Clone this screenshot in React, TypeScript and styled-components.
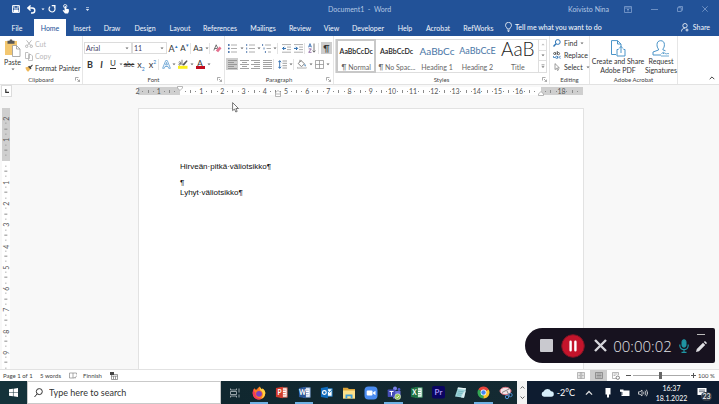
import React from 'react';
import styled, { createGlobalStyle, css } from 'styled-components';

const ui = 'Lato, "Open Sans", sans-serif';

const GlobalStyle = createGlobalStyle`
  * { box-sizing: border-box; }
  body { margin: 0; font-family: ${ui}; font-size: 7px; color: #333; }
  button, input, select { font: inherit; color: inherit; margin: 0; padding: 0; border: 0; background: none; border-radius: 0; outline: 0; }
  h1, h2, p { margin: 0; font: inherit; }
  svg { display: block; flex: none; }
`;

const Window = styled.div`
  display: flex;
  flex-direction: column;
  height: 100vh;
  overflow: hidden;
  background: #f8f8f8;
`;

/* ---------- title bar and tabs ---------- */
const TitleBar = styled.header`
  display: grid;
  grid-template-columns: 1fr auto 1fr;
  align-items: center;
  height: 18px;
  flex: none;
  background: #225298;
  color: #b4c8e4;
`;
const QuickAccess = styled.div`
  display: flex;
  align-items: center;
  padding-left: 10px;
`;
const WindowControls = styled.div`
  display: flex;
  align-items: center;
  justify-content: flex-end;
  padding-right: 2px;
`;
const UserName = styled.span`margin-right: 6px;`;
const DocTitle = styled.h1`white-space: pre;`;

const IconButton = styled.button<{ $w?: number; $h?: number; $on?: boolean }>`
  display: flex;
  align-items: center;
  justify-content: center;
  flex: none;
  width: ${p => p.$w ?? 12}px;
  height: ${p => p.$h ?? 12}px;
  background: ${p => (p.$on ? '#cdcdcd' : 'transparent')};
`;

const TabBar = styled.nav`
  display: flex;
  align-items: stretch;
  height: 18px;
  flex: none;
  background: #225298;
  color: #f4f7fc;
`;
const Tab = styled.button<{ $w: number; $active?: boolean }>`
  width: ${p => p.$w}px;
  flex: none;
  margin-top: 1px;
  white-space: nowrap;
  ${p => p.$active && css`background: #fff; color: #225298;`}
`;
const TellMe = styled.button`
  display: flex;
  align-items: center;
  gap: 3px;
  margin-left: 5px;
  font-weight: 500;
  white-space: nowrap;
`;
const Share = styled.button`
  display: flex;
  align-items: center;
  gap: 4px;
  margin-left: auto;
  padding-right: 9px;
`;

/* ---------- ribbon ---------- */
const Ribbon = styled.div`
  display: flex;
  height: 49px;
  flex: none;
  background: #fff;
  border-bottom: 1px solid #e2e2e2;
`;
const GroupBox = styled.section<{ $w: number }>`
  display: flex;
  flex-direction: column;
  width: ${p => p.$w}px;
  flex: none;
  border-right: 1px solid #e6e6e6;
`;
const GroupBody = styled.div`
  display: flex;
  flex: 1;
  min-height: 0;
`;
const GroupFooter = styled.div`
  display: grid;
  grid-template-columns: 8px 1fr 8px;
  align-items: center;
  height: 9px;
  font-size: 6px;
  text-align: center;
  color: #444;
`;
const Rows = styled.div`
  display: flex;
  flex-direction: column;
  gap: 4px;
  padding: 6px 0 0 1px;
`;
const Row = styled.div`
  display: flex;
  align-items: center;
  height: 12px;
`;
const Sep = styled.i<{ $w?: number }>`
  width: 1px;
  height: 11px;
  margin: 0 ${p => p.$w ?? 1}px 0 0;
  background: #e4e4e4;
`;
const Combo = styled.label<{ $w: number }>`
  display: flex;
  align-items: center;
  width: ${p => p.$w}px;
  height: 12px;
  border: 1px solid #dcdcdc;
  padding: 0 2px 0 1px;
  flex: none;
  select { appearance: none; flex: 1; min-width: 0; line-height: 10px; color: #446; }
`;
const Paste = styled.button`
  display: flex;
  flex-direction: column;
  align-items: center;
  width: 25px;
  padding-top: 3px;
  gap: 1px;
  line-height: 9px;
`;
const ClipList = styled.div`
  display: flex;
  flex-direction: column;
  padding-top: 2px;
`;
const TextButton = styled.button<{ $off?: boolean }>`
  display: flex;
  align-items: center;
  gap: 2px;
  height: 12px;
  line-height: 12px;
  white-space: nowrap;
  color: ${p => (p.$off ? '#b8b8b8' : '#333')};
`;
const Glyph = styled.span<{ $size?: number; $bold?: boolean; $italic?: boolean; $under?: string; $strike?: boolean }>`
  font-size: ${p => p.$size ?? 9}px;
  line-height: 9px;
  font-weight: ${p => (p.$bold ? 700 : 400)};
  font-style: ${p => (p.$italic ? 'italic' : 'normal')};
  text-decoration: ${p => (p.$strike ? 'line-through' : 'none')};
  border-bottom: ${p => (p.$under ? `1px solid ${p.$under}` : '0')};
  white-space: nowrap;
  sub, sup { font-size: 5px; line-height: 0; color: #2f78c0; }
`;
const Swatch = styled.span<{ $color: string }>`
  display: flex;
  justify-content: center;
  width: 9px;
  height: 10px;
  font-size: 8px;
  line-height: 8px;
  border-bottom: 3px solid ${p => p.$color};
`;

const Gallery = styled.div`
  display: flex;
  flex: 1;
  height: 34px;
  margin: 3px 2px 0 1px;
  border: 1px solid #dedede;
`;
const StyleCell = styled.button<{ $active?: boolean }>`
  display: grid;
  grid-template-rows: 21px 9px;
  grid-template-columns: minmax(0, 1fr);
  flex: 1 1 0;
  min-width: 0;
  margin: -1px 0;
  align-items: center;
  white-space: nowrap;
  color: #666;
  border: 2px solid ${p => (p.$active ? '#c8c8c8' : 'transparent')};
`;
const Sample = styled.span<{ $size: number; $color: string }>`
  align-self: start;
  font-size: ${p => p.$size}px;
  line-height: ${p => (p.$size > 12 ? 15 : 20)}px;
  color: ${p => p.$color};
  font-weight: ${p => (p.$size < 8 ? 600 : p.$size < 12 ? 400 : 300)};
`;
const GalleryNav = styled.div`
  display: grid;
  grid-template-rows: repeat(3, 1fr);
  width: 8px;
  border-left: 1px solid #dedede;
  button { display: flex; align-items: center; justify-content: center; border-bottom: 1px solid #dedede; }
  button:last-child { border-bottom: 0; }
`;
const EditList = styled.div`
  display: flex;
  flex-direction: column;
  padding: 1px 0 0 3px;
`;
const EditButton = styled(TextButton)`gap: 3px;`;
const AcrobatButtons = styled.div`
  display: flex;
  padding-left: 1px;
`;
const BigButton = styled.button<{ $w: number }>`
  display: flex;
  flex-direction: column;
  align-items: center;
  width: ${p => p.$w}px;
  padding-top: 4px;
  line-height: 9px;
  white-space: nowrap;
`;
const Collapse = styled.button`
  margin: auto 4px 3px auto;
`;

/* ---------- workspace ---------- */
const RulerRow = styled.div`
  display: flex;
  flex: none;
  height: 12px;
`;
const TabPicker = styled.button`
  display: flex;
  align-items: center;
  justify-content: center;
  width: 11px;
  height: 12px;
  margin-left: 1px;
  background: #fff;
  border: 1px solid #dcdcdc;
`;
const HRuler = styled.div`
  position: relative;
  width: 445px;
  height: 8px;
  margin: 2px 0 0 126px;
  background: linear-gradient(90deg, #cfcfcf 0 42px, #fff 42px 403px, #cfcfcf 403px);
`;
const HScale = styled.div`
  display: grid;
  grid-template-columns: repeat(84, minmax(0, 1fr));
  width: 445px;
  height: 8px;
  margin-left: -3px;
`;
const VRuler = styled.div`
  width: 8px;
  flex: none;
  margin: 11px 0 0 2px;
  padding-top: 8px;
  overflow: hidden;
  background: linear-gradient(#cfcfcf 0 53px, #fff 53px);
`;
const VScale = styled.div`
  display: grid;
  grid-template-rows: repeat(48, minmax(0, 1fr));
  height: 255px;
`;
const Tick = styled.span<{ $v?: boolean }>`
  display: flex;
  align-items: center;
  justify-content: center;
  min-height: 0;
  font-size: 7px;
  line-height: 6px;
  color: #555;
  ${p => p.$v && css`transform: rotate(-90deg);`}
`;
const Mark = styled.i<{ $tall?: boolean }>`
  width: 1px;
  height: ${p => (p.$tall ? 3 : 1)}px;
  background: #8c8c8c;
`;
const Marker = styled.svg<{ $x: number; $y: number }>`
  position: absolute;
  left: ${p => p.$x}px;
  top: ${p => p.$y}px;
`;
const Workspace = styled.main`
  position: relative;
  display: flex;
  flex: 1;
  min-height: 0;
`;
const Page = styled.article`
  width: 446px;
  margin: 11px 0 0 128px;
  padding: 53px 41px 0;
  background: #fff;
  border: 1px solid #e2e2e2;
  border-bottom: 0;
  font-family: "Liberation Sans", Arial, sans-serif;
  font-size: 8px;
  line-height: 10px;
  color: #111;
`;
const Heading = styled.h2`margin-bottom: 6px;`;
const Pointer = styled.svg`
  position: absolute;
  left: 232px;
  top: 5px;
`;

/* ---------- status bar ---------- */
const StatusBar = styled.footer`
  display: flex;
  align-items: center;
  height: 12px;
  flex: none;
  padding: 0 1px 0 3px;
  background: #fff;
  border-top: 1px solid #e2e2e2;
  font-size: 6px;
  color: #444;
`;
const StatusText = styled.span<{ $w: number }>`width: ${p => p.$w}px; white-space: nowrap;`;
const Language = styled(StatusText)`margin-left: 6px;`;
const StatusRight = styled.div`
  display: flex;
  align-items: center;
  margin-left: auto;
`;
const Zoom = styled.input`
  appearance: none;
  width: 57px;
  height: 9px;
  margin: 0 1px;
  background: linear-gradient(#aaa, #aaa) center / 100% 1px no-repeat;
  &::-webkit-slider-thumb { appearance: none; width: 3px; height: 7px; background: #666; }
`;

/* ---------- taskbar ---------- */
const Taskbar = styled.footer`
  display: flex;
  height: 23px;
  flex: none;
  background: #0e1c30;
  color: #fff;
`;
const Start = styled.button`
  display: flex;
  align-items: center;
  justify-content: center;
  width: 27px;
  background: #14323a;
`;
const SearchBox = styled.label`
  display: flex;
  align-items: center;
  gap: 6px;
  width: 194px;
  padding-left: 6px;
  background: #fff;
  border: 1px solid #c9c9c9;
  color: #333;
  font-size: 9px;
  input { width: 130px; line-height: 14px; }
  input::placeholder { color: #333; opacity: 1; }
`;
const Apps = styled.div`
  display: grid;
  grid-template-columns: 27px repeat(12, 1fr);
  flex: 0 0 296px;
  background: linear-gradient(90deg, #10272f, #142a32);
`;
const AppButton = styled.button<{ $open?: boolean }>`
  display: flex;
  align-items: center;
  justify-content: center;
  margin: 0 2px;
  border-top: 2px solid transparent;
  border-bottom: 2px solid ${p => (p.$open ? '#6fb2e4' : 'transparent')};
`;
const Pager = styled.div`
  display: flex;
  flex-direction: column;
  justify-content: space-between;
  align-items: center;
  width: 10px;
  padding: 4px 0;
  background: #f4f4f4;
`;
const Tray = styled.div`
  display: flex;
  align-items: center;
  flex: 1;
  justify-content: flex-end;
  font-size: 9px;
`;
const Clock = styled.div`
  width: 35px;
  margin-left: 5px;
  font-size: 7px;
  line-height: 10px;
  text-align: center;
`;
const Notice = styled.button`
  position: relative;
  width: 16px;
  height: 16px;
  margin: 0 7px 0 7px;
`;
const Badge = styled.span`
  position: absolute;
  right: 0;
  bottom: 0;
  width: 11px;
  height: 9px;
  border-radius: 5px;
  background: #333c48;
  font-size: 7px;
  line-height: 9px;
`;

/* ---------- floating screen recorder ---------- */
const Recorder = styled.aside`
  position: fixed;
  right: 4px;
  bottom: 41px;
  display: flex;
  align-items: center;
  width: 190px;
  height: 35px;
  padding-left: 15px;
  border-radius: 18px 2px 2px 18px;
  background: #17121f;
  color: #e4e4e8;
`;
const Timer = styled.time`
  width: 71px;
  font-family: "Open Sans", sans-serif;
  font-weight: 300;
  font-size: 15px;
  text-align: center;
`;
const PenColumn = styled.div`
  display: flex;
  flex-direction: column;
  align-items: center;
  justify-content: space-between;
  height: 35px;
  padding: 5px 0 11px 2px;
`;

const Caret = ({ c = '#666' }: { c?: string }) => (
  <svg width="4" height="3" viewBox="0 0 4 3"><path d="M.5.6h3L2 2.3z" fill={c} /></svg>
);
const Drop = ({ w = 5, label }: { w?: number; label: string }) => (
  <IconButton $w={w} aria-label={label}><Caret /></IconButton>
);
const Chevron = ({ up, c = '#444', s = 6 }: { up?: boolean; c?: string; s?: number }) => (
  <svg width={s} height={s} viewBox="0 0 6 6" fill="none" stroke={c}><path d={up ? 'M.7 4.2 3 1.9l2.3 2.3' : 'M.7 1.9 3 4.2l2.3-2.3'} /></svg>
);

const Group = ({ name, w, launcher, children }: { name: string; w: number; launcher?: boolean; children: React.ReactNode }) => (
  <GroupBox $w={w} aria-label={name}>
    <GroupBody>{children}</GroupBody>
    <GroupFooter>
      <span />
      <span>{name}</span>
      {launcher && (
        <IconButton $w={6} $h={6} aria-label={`${name} settings`}>
          <svg width="5" height="5" viewBox="0 0 5 5" fill="none" stroke="#888" strokeWidth=".7"><path d="M.5 3.5v-3h3M2 2l2.4 2.4M4.5 2.6v2h-2" /></svg>
        </IconButton>
      )}
    </GroupFooter>
  </GroupBox>
);

const Lines = ({ widths, align = 'left' }: { widths: number[]; align?: string }) => (
  <svg width="9" height="9" viewBox="0 0 9 9" stroke="#8a8a8a" strokeWidth=".8">
    {widths.map((w, i) => {
      const x = align === 'left' ? 0 : align === 'right' ? 9 - w : (9 - w) / 2;
      return <path key={i} d={`M${x} ${0.5 + i * 2}h${w}`} />;
    })}
  </svg>
);

const ListIcon = ({ kind }: { kind: 'dot' | 'num' | 'multi' }) => (
  <svg width="9" height="9" viewBox="0 0 9 9" fill="none">
    {[1, 4.5, 8].map((y, i) => (
      <g key={y}>
        <path d={`M${kind === 'multi' ? 3 + i * 1.5 : 3} ${y}H9`} stroke="#999" strokeWidth=".8" />
        {kind === 'dot' && <rect x="0" y={y - 0.8} width="1.6" height="1.6" fill="#2e5f9f" />}
        {kind === 'num' && <path d={`M.7 ${y - 1}v2`} stroke="#2e5f9f" strokeWidth=".8" />}
        {kind === 'multi' && <path d={`M${0.6 + i * 1.4} ${y - 1}v2`} stroke="#2e5f9f" strokeWidth=".8" />}
      </g>
    ))}
  </svg>
);

const IndentIcon = ({ flip }: { flip?: boolean }) => (
  <svg width="9" height="9" viewBox="0 0 9 9" fill="none">
    <path d="M0 .6h9M5 3.1h4M5 5.6h4M0 8.2h9" stroke="#999" strokeWidth=".8" />
    <path d={flip ? 'M0 4.4h3.4M2 2.8l1.6 1.6L2 6' : 'M4 4.4H.6M2.2 2.8.6 4.4 2.2 6'} stroke="#2467ad" strokeWidth="1" />
  </svg>
);

const tabs: [string, number][] = [
  ['File', 34], ['Home', 32], ['Insert', 32], ['Draw', 28], ['Design', 38], ['Layout', 32], ['References', 48],
  ['Mailings', 38], ['Review', 36], ['View', 27], ['Developer', 46], ['Help', 28], ['Acrobat', 38], ['RefWorks', 43],
];

const styleCells = [
  { name: '¶ Normal', sample: 'AaBbCcDc', size: 7, color: '#222' },
  { name: '¶ No Spac...', sample: 'AaBbCcDc', size: 7, color: '#222' },
  { name: 'Heading 1', sample: 'AaBbCc', size: 10, color: '#4a76a6' },
  { name: 'Heading 2', sample: 'AaBbCcE', size: 9, color: '#4a76a6' },
  { name: 'Title', sample: 'AaB', size: 19, color: '#222' },
];

const scale = (start: number, cells: number, hidden: number[], vertical?: boolean) =>
  Array.from({ length: cells * 4 }, (_, i) => {
    const n = Math.abs(start + i / 4);
    const part = i % 4;
    return (
      <Tick key={i} $v={vertical}>
        {part === 0 ? (hidden.includes(start + i / 4) ? '' : n) : <Mark $tall={part === 2} />}
      </Tick>
    );
  });

const OfficeIcon = ({ letter, color, light }: { letter: string; color: string; light: string }) => (
  <svg width="13" height="13" viewBox="0 0 14 14">
    <rect x="6" y="2" width="7" height="10" fill="#fff" stroke={light} />
    <path d="M8.5 4.5h3M8.5 7h3M8.5 9.5h3" stroke={light} strokeWidth=".9" />
    <path d="M1 2.2 8.5.8v12.4L1 11.8z" fill={color} />
    <text x="4.8" y="9.6" fontSize="7" fontWeight="700" textAnchor="middle" fill="#fff">{letter}</text>
  </svg>
);

export default function App() {
  return (
    <Window>
      <GlobalStyle />
      <TitleBar>
        <QuickAccess>
          <IconButton aria-label="Save">
            <svg width="8" height="8" viewBox="0 0 8 8" fill="none" stroke="#fff"><path d="M.6.6h6.8v6.8H.6z" /><path d="M2 .6v2.6h4V.6" strokeWidth=".8" /><path d="M2 7.2V5h4v2.2" fill="#fff" /></svg>
          </IconButton>
          <IconButton $w={19} aria-label="Undo">
            <svg width="9" height="9" viewBox="0 0 9 9" fill="none" stroke="#fff" strokeWidth="1.4"><path d="M3.6.6.9 3l2.7 2.4M1 3h4.3a2.5 2.5 0 0 1 0 5H4" /></svg>
          </IconButton>
          <Caret c="#fff" />
          <IconButton $w={14} aria-label="Redo">
            <svg width="8" height="8" viewBox="0 0 9 9" fill="none" stroke="#fff" strokeWidth="1.3"><path d="M2.4 1.8a3.4 3.4 0 1 0 4.4.1M4.2.7h3.6v3.4" /></svg>
          </IconButton>
          <IconButton $w={14} aria-label="Touch mode">
            <svg width="8" height="10" viewBox="0 0 8 10"><circle cx="3.2" cy="2.2" r="1.7" fill="none" stroke="#fff" strokeWidth=".8" /><path d="M2.6 2.2a.7.7 0 0 1 1.3 0v2.4l3 .7v2.1L6 9.6H3L.6 6.6l.9-.6 1.1.8z" fill="#fff" /></svg>
          </IconButton>
          <Caret c="#fff" />
          <IconButton $w={20} aria-label="Customize toolbar">
            <svg width="5" height="5" viewBox="0 0 5 5"><path d="M1 .6h3" stroke="#dce6f4" strokeWidth=".7" /><path d="M.8 2h3.4L2.5 4z" fill="#dce6f4" /></svg>
          </IconButton>
        </QuickAccess>
        <DocTitle>Document1  -  Word</DocTitle>
        <WindowControls>
          <UserName>Koivisto Nina</UserName>
          <IconButton $w={26} aria-label="Ribbon display options">
            <svg width="8" height="7" viewBox="0 0 8 7" fill="none" stroke="#7f9fce" strokeWidth=".8"><path d="M.5.5h7v6h-7zM.5 2h7M4 5.6V3M3 4l1-1 1 1" /></svg>
          </IconButton>
          <IconButton $w={26} aria-label="Minimize">
            <svg width="7" height="7" viewBox="0 0 7 7" stroke="#7f9fce" strokeWidth=".8"><path d="M0 3.5h7" /></svg>
          </IconButton>
          <IconButton $w={26} aria-label="Restore">
            <svg width="6" height="6" viewBox="0 0 6 6" fill="none" stroke="#7f9fce" strokeWidth=".8"><path d="M.5 1.7h3.8v3.8H.5zM1.7 1.5V.5h3.8v3.8H4.5" /></svg>
          </IconButton>
          <IconButton $w={24} aria-label="Close">
            <svg width="6" height="6" viewBox="0 0 6 6" stroke="#7f9fce" strokeWidth=".8"><path d="m.3.3 5.4 5.4M5.7.3.3 5.7" /></svg>
          </IconButton>
        </WindowControls>
      </TitleBar>

      <TabBar>
        {tabs.map(([name, w]) => <Tab key={name} $w={w} $active={name === 'Home'}>{name}</Tab>)}
        <TellMe>
          <svg width="7" height="10" viewBox="0 0 7 10" fill="none" stroke="#fff" strokeWidth=".8"><path d="M2.3 7C2.3 5.6.5 5 .5 3.3a3 3 0 0 1 6 0C6.5 5 4.7 5.6 4.7 7zM2.4 8.3h2.2M2.8 9.5h1.4" /></svg>
          Tell me what you want to do
        </TellMe>
        <Share>
          <svg width="8" height="9" viewBox="0 0 8 9" fill="none" stroke="#fff" strokeWidth=".8"><circle cx="4" cy="2.7" r="2.2" /><path d="M.5 8.5c0-2 1.4-3.4 3.5-3.4M4.5 7h3M6 5.5v3" /></svg>
          Share
        </Share>
      </TabBar>

      <Ribbon>
        <Group name="Clipboard" w={83} launcher>
          <Paste>
            <svg width="17" height="18" viewBox="0 0 17 18">
              <rect x="1" y="2" width="12" height="14" fill="#f3c770" />
              <path d="M3.500 1.800h2a1.500 1.500 0 0 1 3 0h2v3h-7z" fill="#555" />
              <path d="M8.500 6.500h4l3.500 3.500v7.500H8.500z" fill="#fff" stroke="#999" strokeWidth=".8" /><path d="M12.500 6.500V10H16" fill="none" stroke="#999" strokeWidth=".8" />
            </svg>
            Paste
            <Caret />
          </Paste>
          <ClipList>
            <TextButton $off>
              <svg width="8" height="8" viewBox="0 0 8 8" fill="none" stroke="#a8a8a8" strokeWidth=".8"><path d="m1.500.3 4 5M6.500.3l-4 5" /><circle cx="1.700" cy="6.300" r="1.200" /><circle cx="6.300" cy="6.300" r="1.200" /></svg>
              Cut
            </TextButton>
            <TextButton $off>
              <svg width="8" height="9" viewBox="0 0 8 9" fill="#fff" stroke="#b0b0b0" strokeWidth=".8"><path d="M.5.5H3L4.500 2v4.500h-4zM3.500 2.500H6L7.500 4v4.500h-4z" /></svg>
              Copy
            </TextButton>
            <TextButton>
              <svg width="8" height="8" viewBox="0 0 8 8"><path d="m.4 3.500 3.200-1L5.600 5l-2.400 2.700C2 7.400.8 5.500.4 3.500z" fill="#efb95a" /><path d="m3 2.700 1.200-1 .9.800L7.200.6l.6.800-1.900 2 .6 1-1.100.8z" fill="#444" /></svg>
              Format Painter
            </TextButton>
          </ClipList>
        </Group>

        <Group name="Font" w={142} launcher>
          <Rows>
            <Row>
              <Combo $w={48}><select aria-label="Font"><option>Arial</option></select><Caret /></Combo>
              <Combo $w={35}><select aria-label="Font size"><option>11</option></select><Caret /></Combo>
              <IconButton aria-label="Grow font"><Glyph>A<sup>▴</sup></Glyph></IconButton>
              <IconButton $w={11} aria-label="Shrink font"><Glyph $size={8}>A<sup>▾</sup></Glyph></IconButton>
              <Sep />
              <IconButton $w={12} aria-label="Change case"><Glyph $size={8}>Aa</Glyph></IconButton>
              <Drop label="Case options" />
              <Sep />
              <IconButton $w={13} aria-label="Clear formatting">
                <svg width="9" height="9" viewBox="0 0 9 9"><path d="M.8 6.500 3.200.8l1.800 4M1.500 4.500h2.700" fill="none" stroke="#555" strokeWidth=".8" /><path d="m6.600 2.500 1.900 1.700-3.400 4-2.300-1.600z" fill="#e4708e" /></svg>
              </IconButton>
            </Row>
            <Row>
              <IconButton aria-label="Bold"><Glyph $bold>B</Glyph></IconButton>
              <IconButton $w={11} aria-label="Italic"><Glyph $italic $bold>I</Glyph></IconButton>
              <IconButton aria-label="Underline"><Glyph $size={8} $under="#333">U</Glyph></IconButton>
              <Drop label="Underline options" w={4} />
              <IconButton aria-label="Strikethrough"><Glyph $size={7} $strike>abc</Glyph></IconButton>
              <IconButton aria-label="Subscript"><Glyph>x<sub>2</sub></Glyph></IconButton>
              <IconButton $w={11} aria-label="Superscript"><Glyph>x<sup>2</sup></Glyph></IconButton>
              <Sep $w={2} />
              <IconButton $w={10} aria-label="Text effects">
                <svg width="9" height="9" viewBox="0 0 9 9" fill="#fff" stroke="#5a9bd0" strokeWidth=".8"><path d="M.6 8.300 3.700.6h1.600l3.100 7.700H6.700L6 6.500H3l-.7 1.800zM3.600 5h1.800l-.9-2.500z" /></svg>
              </IconButton>
              <Drop label="Text effect options" w={6} />
              <IconButton aria-label="Highlight">
                <svg width="10" height="10" viewBox="0 0 10 10"><rect y="6.800" width="9.500" height="3" fill="#fbef1c" /><path d="m4 6 4.500-4.800L9.700 2 6 6.500z" fill="#555" /><path d="M.7 3.300C2.500 2 3 3.300 2.800 6M2.800 4.300c-2.400 0-2.500 2-.8 1.700M4 .8v4.700" fill="none" stroke="#444" strokeWidth=".7" /></svg>
              </IconButton>
              <Drop label="Highlight options" />
              <IconButton aria-label="Font color"><Swatch $color="#c00d1e">A</Swatch></IconButton>
              <Drop label="Font color options" />
            </Row>
          </Rows>
        </Group>

        <Group name="Paragraph" w={109} launcher>
          <Rows>
            <Row>
              <IconButton $w={13} aria-label="Bullets"><ListIcon kind="dot" /></IconButton><Drop label="Bullet options" />
              <IconButton aria-label="Numbering"><ListIcon kind="num" /></IconButton><Drop label="Numbering options" />
              <IconButton $w={11} aria-label="Multilevel list"><ListIcon kind="multi" /></IconButton><Drop label="Multilevel options" />
              <Sep $w={2} />
              <IconButton aria-label="Decrease indent"><IndentIcon /></IconButton>
              <IconButton aria-label="Increase indent"><IndentIcon flip /></IconButton>
              <Sep />
              <IconButton aria-label="Sort">
                <svg width="8" height="10" viewBox="0 0 8 10" fill="none" strokeWidth=".8"><path d="M.5 4.300 2 .6l1.500 3.700M1 3.200h2" stroke="#2e66ad" /><path d="M.7 5.900h2.600L.7 9.300h2.800" stroke="#7b4b94" /><path d="M6 .5v8.600M4.600 7.600 6 9.200l1.400-1.600" stroke="#555" /></svg>
              </IconButton>
              <Sep $w={2} />
              <IconButton $w={11} $on aria-label="Show paragraph marks"><Glyph>¶</Glyph></IconButton>
            </Row>
            <Row>
              <IconButton $on aria-label="Align left"><Lines widths={[9, 6, 9, 6, 9]} /></IconButton>
              <IconButton aria-label="Center"><Lines widths={[9, 5, 9, 5, 9]} align="center" /></IconButton>
              <IconButton $w={11} aria-label="Align right"><Lines widths={[9, 6, 9, 6, 9]} align="right" /></IconButton>
              <IconButton $w={12} aria-label="Justify"><Lines widths={[9, 9, 9, 9, 9]} /></IconButton>
              <Sep $w={2} />
              <IconButton aria-label="Line spacing">
                <svg width="9" height="9" viewBox="0 0 9 9" fill="none"><path d="M1.700.7v7.600M.3 2.200 1.700.7l1.400 1.500M.3 6.800l1.400 1.500 1.400-1.500" stroke="#2467ad" strokeWidth=".9" /><path d="M4.500 1h4.500M4.500 3.300h4.500M4.500 5.700h4.500M4.500 8h4.500" stroke="#888" strokeWidth=".8" /></svg>
              </IconButton>
              <Drop label="Line spacing options" />
              <Sep $w={2} />
              <IconButton aria-label="Shading">
                <svg width="10" height="10" viewBox="0 0 10 10"><path d="m4 1.500 3.500 3.300-3 2.800-3.300-3zM3 3V.8" fill="none" stroke="#666" strokeWidth=".8" /><path d="M7.800 4.800c1 1.200 1.300 2.500.4 2.700-.9-.2-.8-1.500-.4-2.700z" fill="#2e75b6" /><rect x=".4" y="8.200" width="9" height="1.500" fill="#fff" stroke="#aaa" strokeWidth=".5" /></svg>
              </IconButton>
              <Drop label="Shading options" />
              <IconButton aria-label="Borders">
                <svg width="9" height="9" viewBox="0 0 9 9" fill="none" stroke="#888" strokeWidth=".7"><path d="M.5.5h8v8h-8zM.5 4.500h8M4.500.5v8" /></svg>
              </IconButton>
              <Drop label="Border options" />
            </Row>
          </Rows>
        </Group>

        <Group name="Styles" w={216} launcher>
          <Gallery>
            {styleCells.map((s, i) => (
              <StyleCell key={s.name} $active={i === 0}>
                <Sample $size={s.size} $color={s.color}>{s.sample}</Sample>
                <span>{s.name}</span>
              </StyleCell>
            ))}
            <GalleryNav>
              <button aria-label="Previous styles"><svg width="4" height="3" viewBox="0 0 4 3"><path d="M.5 2.300h3L2 .6z" fill="#bbb" /></svg></button>
              <button aria-label="Next styles"><Caret /></button>
              <button aria-label="More styles"><svg width="4" height="5" viewBox="0 0 4 5"><path d="M.5.8h3" stroke="#777" strokeWidth=".7" /><path d="M.5 2.200h3L2 4z" fill="#777" /></svg></button>
            </GalleryNav>
          </Gallery>
        </Group>

        <Group name="Editing" w={40}>
          <EditList>
            <EditButton>
              <svg width="8" height="8" viewBox="0 0 8 8" fill="none" stroke="#2e75b6"><circle cx="4.800" cy="3" r="2.400" /><path d="M3 4.800.5 7.400" strokeWidth="1.400" /></svg>
              Find <Caret />
            </EditButton>
            <EditButton>
              <svg width="8" height="8" viewBox="0 0 8 8" fill="none" strokeWidth=".8"><circle cx="1.600" cy="2.500" r="1" stroke="#444" /><path d="M2.700 1.300v2.400M4.300 0v3.700" stroke="#444" /><circle cx="5.500" cy="2.600" r="1.100" stroke="#444" /><circle cx="3.600" cy="6.300" r="1.100" stroke="#2e75b6" /><path d="M4.700 5v2.500M7.600 5.300c-1.800-.4-1.900 2.300 0 2M.5 5v1.500h1.500" stroke="#2e75b6" /></svg>
              Replace
            </EditButton>
            <EditButton>
              <svg width="8" height="8" viewBox="0 0 8 8" fill="#fff" stroke="#777" strokeWidth=".7"><path d="M2 .6v6l1.500-1.300 1 2.200 1-.5-1-2.100h1.900z" /></svg>
              Select <Caret />
            </EditButton>
          </EditList>
        </Group>

        <Group name="Adobe Acrobat" w={88}>
          <AcrobatButtons>
            <BigButton $w={54}>
              <svg width="16" height="17" viewBox="0 0 16 17" fill="none" stroke="#4a94c8"><path d="M6 14.500H1.500V.6h6L11 4v3M7.500.6V4H11" /><path d="M8.500 9.500H7v6.500h8V9.500h-1.500M11 13V6.500M9 8.500l2-2 2 2" /></svg>
              <span>Create and Share</span><span>Adobe PDF</span>
            </BigButton>
            <BigButton $w={32}>
              <svg width="18" height="17" viewBox="0 0 18 17" fill="none" stroke="#4a94c8"><path d="M6.500 9C5.500 8 5 6.500 5 4.700 5 2 6.500.7 8.700.7s3.700 1.300 3.700 4c0 1.800-.5 3.300-1.500 4.300M6.500 9v1L1 12v3h8M10.900 9v.8l2.600 1" /><path d="M9.500 14c2-3 2.500-2 1.800 0 1.500-2 2-1 2.200-.3.500.8 2-.7 3.500 0M9 16h8" strokeWidth=".8" /></svg>
              <span>Request</span><span>Signatures</span>
            </BigButton>
          </AcrobatButtons>
        </Group>
        <Collapse aria-label="Collapse ribbon"><Chevron up /></Collapse>
      </Ribbon>

      <RulerRow>
        <TabPicker aria-label="Tab stop type"><svg width="4" height="4" viewBox="0 0 4 4" fill="none" stroke="#333" strokeWidth="1.200"><path d="M.8 0v3.300H4" /></svg></TabPicker>
        <HRuler>
          <HScale>{scale(-2, 21, [0, 17])}</HScale>
          <Marker $x={39} $y={-1} width="6" height="5" viewBox="0 0 6 5" fill="#fff" stroke="#999" strokeWidth=".7"><path d="M.5.5h5V2L3 4.500.5 2z" /></Marker>
          <Marker $x={137} $y={3} width="6" height="7" viewBox="0 0 6 7" fill="#fff" stroke="#999" strokeWidth=".7"><path d="M.5 2.500 3 .5l2.500 2v4h-5zM.5 4h5" /></Marker>
          <Marker $x={400} $y={4} width="6" height="5" viewBox="0 0 6 5" fill="#fff" stroke="#999" strokeWidth=".7"><path d="M.5 4.500V3L3 .5 5.500 3v1.500z" /></Marker>
        </HRuler>
      </RulerRow>

      <Workspace>
        <VRuler><VScale>{scale(-2, 12, [0], true)}</VScale></VRuler>
        <Page>
          <Heading>Hirveän·pitkä·väliotsikko¶</Heading>
          <p>¶</p>
          <h2>Lyhyt·väliotsikko¶</h2>
        </Page>
        <Pointer width="8" height="11" viewBox="0 0 8 11" fill="#fff" stroke="#555" strokeWidth=".8"><path d="M.6.600v8L2.500 7l1.300 3 1.400-.6L3.900 6.500h2.600z" /></Pointer>
      </Workspace>

      <StatusBar>
        <StatusText $w={37}>Page 1 of 1</StatusText>
        <StatusText $w={28}>5 words</StatusText>
        <IconButton $w={9} $h={9} aria-label="Proofing">
          <svg width="8" height="7" viewBox="0 0 8 7" fill="none" stroke="#888" strokeWidth=".7"><path d="M4 1H.5v5H4zM4 1h3.500v1.500M4 6h1M5 5l1 1.300L7.800 3.500" /></svg>
        </IconButton>
        <Language $w={26}>Finnish</Language>
        <IconButton $w={9} $h={9} aria-label="Macros">
          <svg width="8" height="8" viewBox="0 0 8 8" fill="none" stroke="#777" strokeWidth=".7"><path d="M1.500 2.500h6v5h-6zM1.500 4.200h6M3.500 4.200v3M5.500 4.200v3" /><path d="M0 0h4v3H0z" fill="#444" stroke="none" /></svg>
        </IconButton>
        <StatusRight>
          <IconButton $w={18} $h={11} aria-label="Read mode"><svg width="8" height="7" viewBox="0 0 8 7" fill="none" stroke="#999" strokeWidth=".7"><path d="M.5.5h3.500v6H.5zM4 .5h3.500v6H4zM1.300 2h2M1.300 3.500h2M1.300 5h2M4.800 2h2M4.800 3.500h2M4.800 5h2" /></svg></IconButton>
          <IconButton $w={17} $h={11} $on aria-label="Print layout"><svg width="8" height="7" viewBox="0 0 8 7" fill="none" stroke="#777" strokeWidth=".7"><path d="M.5.5h7v6h-7zM1.500 2h5M1.500 3.500h5M1.500 5h5" /></svg></IconButton>
          <IconButton $w={17} $h={11} aria-label="Web layout"><svg width="8" height="8" viewBox="0 0 8 8" fill="none" stroke="#999" strokeWidth=".7"><path d="M4 6.500H.5v-6h6V3M1.500 2h4M1.500 3.500h2" /><circle cx="5.800" cy="5.700" r="1.700" stroke="#555" /></svg></IconButton>
          <IconButton $w={8} $h={9} aria-label="Zoom out"><svg width="5" height="5" viewBox="0 0 5 5" stroke="#555"><path d="M0 2.500h5" /></svg></IconButton>
          <Zoom type="range" aria-label="Zoom" min={0} max={100} defaultValue={49} />
          <IconButton $w={4} $h={9} aria-label="Zoom in"><svg width="5" height="5" viewBox="0 0 5 5" stroke="#555"><path d="M0 2.500h5M2.500 0v5" /></svg></IconButton>
          <IconButton $w={23} $h={9}>100 %</IconButton>
        </StatusRight>
      </StatusBar>

      <Taskbar>
        <Start aria-label="Start"><svg width="9" height="9" viewBox="0 0 10 10" fill="#fff"><path d="M0 1.400 4.400.8v3.900H0zM5 .7 10 0v4.700H5zM0 5.300h4.400v3.900L0 8.600zM5 5.300h5V10l-5-.7z" /></svg></Start>
        <SearchBox>
          <svg width="9" height="10" viewBox="0 0 9 10" fill="none" stroke="#333"><circle cx="5.300" cy="3.600" r="3" /><path d="M3.200 5.800.5 9" /></svg>
          <input placeholder="Type here to search" aria-label="Search" />
        </SearchBox>
        <Apps>
          <AppButton aria-label="Task view"><svg width="10" height="10" viewBox="0 0 10 10" fill="none" stroke="#b7c0c4" strokeWidth=".8"><path d="M.5.500V2h6V.5M.5 3.500h6v3h-6zM.5 9.500V8h6v1.500M9 .5v4M9 6.500v3" /></svg></AppButton>
          <AppButton $open aria-label="Firefox">
            <svg width="14" height="14" viewBox="0 0 14 14"><path d="M7 13.500A6.300 6.300 0 0 1 .7 7C.7 5 1.500 3.500 2.500 2.200l.8 1.300 1.700.1C5.500 2 6.800 1 8 .4c.1 1.500 1 2 2 3l.5-1C12.300 3.600 13.400 5.400 13.300 7.300A6.200 6.200 0 0 1 7 13.500z" fill="#ff7a22" /><path d="M8 .4c.1 1.500 1 2 2 3l.5-1c1.800 1.200 2.900 3 2.800 4.900-.4 3-2 4.600-4 5.400C12 9 11 5.500 8.500 4.500 7.500 3.500 7.500 2 8 .4z" fill="#ffd342" /><circle cx="7" cy="7.800" r="2.900" fill="#7d43c0" /><path d="M.7 7c0 4 2.700 6.500 6.300 6.500 1 0 2-.2 3-.8C5 12.500 3 10 3.500 6.500 2 6 1.500 5 2.500 2.200 1.500 3.400.7 5 .7 7z" fill="#f2385a" /></svg>
          </AppButton>
          <AppButton aria-label="PowerPoint"><OfficeIcon letter="P" color="#d03a2c" light="#e06a58" /></AppButton>
          <AppButton $open aria-label="Word"><OfficeIcon letter="W" color="#2b5797" light="#7c9fd0" /></AppButton>
          <AppButton aria-label="Outlook"><svg width="13" height="13" viewBox="0 0 14 14"><rect x="7" y="3" width="6" height="8" fill="#fff" stroke="#1f7dc4" /><path d="m7.500 4 2.800 3L13 4" fill="none" stroke="#1f7dc4" /><path d="M1 2.200 8.500.8v12.400L1 11.800z" fill="#0f6cbd" /><circle cx="4.700" cy="7" r="2" fill="none" stroke="#fff" strokeWidth="1.300" /></svg></AppButton>
          <AppButton aria-label="File Explorer"><svg width="14" height="12" viewBox="0 0 14 12"><path d="M1 .8h4.500L7 2h6v9.500H1z" fill="#dba53a" /><path d="M1 3.500h12v8H1z" fill="#fbe08a" /><path d="M3.500 11.500v-4h7v4H8.700V9.300H5.300v2.200z" fill="#3c9cd8" /></svg></AppButton>
          <AppButton aria-label="Zoom"><svg width="14" height="14" viewBox="0 0 14 14"><rect x=".5" y=".5" width="13" height="13" rx="4" fill="#4a8cf0" /><rect x="2.700" y="4.500" width="5.800" height="5" rx="1" fill="#fff" /><path d="m9 6.400 2.500-1.700v4.600L9 7.600z" fill="#fff" /></svg></AppButton>
          <AppButton $open aria-label="Teams"><svg width="14" height="14" viewBox="0 0 14 14"><circle cx="8" cy="2.500" r="2" fill="#7b83eb" /><circle cx="12" cy="3.500" r="1.400" fill="#5059c9" /><path d="M6 5h7.500v4.500a3 3 0 0 1-3 3H6z" fill="#6b70d8" /><rect x=".7" y="3.500" width="7.500" height="7.500" rx=".7" fill="#464eb8" /><path d="M2.500 5.500h4M4.500 5.500v4" stroke="#fff" /><circle cx="10.700" cy="10.700" r="2.900" fill="#92c353" stroke="#fff" strokeWidth=".5" /><path d="m9.300 10.800 1 1 1.800-2" fill="none" stroke="#fff" strokeWidth=".8" /></svg></AppButton>
          <AppButton aria-label="Excel"><OfficeIcon letter="X" color="#1e7145" light="#4da373" /></AppButton>
          <AppButton aria-label="Premiere Pro"><svg width="13" height="13" viewBox="0 0 13 13"><rect width="13" height="12.500" rx="2" fill="#0a0462" /><text x="6.500" y="9" fontSize="8" fontWeight="600" textAnchor="middle" fill="#b3a2ff">Pr</text></svg></AppButton>
          <AppButton aria-label="Notepad"><svg width="13" height="13" viewBox="0 0 13 13"><path d="m4 1.500 8 .8-2 9.500-9-1.300z" fill="#9ed5da" /><path d="m4 1.500 8 .8-.4 1.500-8-1z" fill="#e8f4f4" /><path d="m9 7 3-3-2 7.800-3-.4z" fill="#d9eef0" /><path d="M4 5.200l5.500.6M3.500 7l5 .6M3 8.800l4 .5" stroke="#63aab3" strokeWidth=".6" /></svg></AppButton>
          <AppButton $open aria-label="Chrome"><svg width="13" height="13" viewBox="0 0 14 14"><path d="M7 7 1.400 3.800A6.500 6.500 0 0 1 12.600 3.800z" fill="#e8453c" /><path d="M7 7 1.400 3.800A6.500 6.500 0 0 0 7 13.500z" fill="#34a853" /><path d="M7 7h0l5.600-3.200A6.500 6.500 0 0 1 7 13.500z" fill="#fbc62c" /><circle cx="7" cy="7" r="3.100" fill="#fff" /><circle cx="7" cy="7" r="2.400" fill="#4285f4" /></svg></AppButton>
          <AppButton aria-label="Snipping Tool"><svg width="14" height="14" viewBox="0 0 14 14"><ellipse cx="6.500" cy="5" rx="5.500" ry="3.700" fill="#f3e4e6" stroke="#dd7380" /><path d="m3 6.500 8-4M8 5l2.500 5.500" stroke="#777" strokeWidth=".9" /><circle cx="8" cy="11" r="1.700" fill="none" stroke="#4e8ed0" /><circle cx="11.500" cy="9" r="1.700" fill="none" stroke="#4e8ed0" /></svg></AppButton>
        </Apps>
        <Pager>
          <IconButton $w={8} $h={5} aria-label="Previous apps"><Chevron up s={5} /></IconButton>
          <IconButton $w={8} $h={5} aria-label="Next apps"><Chevron s={5} /></IconButton>
        </Pager>
        <Tray>
          <IconButton $w={18} aria-label="Weather"><svg width="13" height="9" viewBox="0 0 13 9"><path d="M3 8.700A2.600 2.600 0 0 1 2.600 3.600 4 4 0 0 1 10 3.300a2.700 2.700 0 0 1 .2 5.400z" fill="#d6edf9" /></svg></IconButton>
          <span>-2°C</span>
          <IconButton $w={28} aria-label="Hidden icons"><Chevron up c="#ddd" s={8} /></IconButton>
          <IconButton $w={10} aria-label="USB device"><svg width="6" height="10" viewBox="0 0 6 10" fill="#fff"><path d="M.5 0h5v6.500H4v3H2v-3H.5z" /></svg></IconButton>
          <IconButton $w={24} aria-label="Battery"><svg width="10" height="8" viewBox="0 0 10 8"><rect x="2" y="2" width="7" height="4.500" fill="#fff" stroke="#fff" /><path d="M0 .5h3.500v2.300H0z" fill="#fff" /><path d="M2 3v3" stroke="#0e1c30" strokeWidth=".7" /></svg></IconButton>
          <IconButton $w={12} aria-label="Volume"><svg width="10" height="8" viewBox="0 0 10 8" fill="none" stroke="#e4e4e4" strokeWidth=".8"><path d="M.5 2.800h1.500L4 1v6L2 5.200H.5zM5.500 2.800q1 1.200 0 2.400M7 1.700q1.800 2.300 0 4.600M8.400.7q2.600 3.300 0 6.600" /></svg></IconButton>
          <Clock><div>16:37</div><div>18.1.2022</div></Clock>
          <Notice aria-label="23 notifications">
            <svg width="11" height="11" viewBox="0 0 11 11"><path d="M1.500 1h9v7H7l-2 2.500V8H1.500z" fill="#fff" /><path d="M3 3h6M3 4.700h6" stroke="#0e1c30" strokeWidth=".6" /></svg>
            <Badge>23</Badge>
          </Notice>
        </Tray>
      </Taskbar>

      <Recorder aria-label="Screen recorder">
        <IconButton $w={13} $h={13} aria-label="Stop"><svg width="13" height="13" viewBox="0 0 13 13"><rect width="13" height="13" rx="1" fill="#c9c9cf" /></svg></IconButton>
        <IconButton $w={40} $h={26} aria-label="Pause"><svg width="24" height="24" viewBox="0 0 24 24"><circle cx="12" cy="12" r="11.300" fill="#c4142b" stroke="#7a1524" /><path d="M9.600 7.800v8.400M14.400 7.800v8.400" stroke="#fff" strokeWidth="2.400" strokeLinecap="round" /></svg></IconButton>
        <IconButton $w={14} $h={14} aria-label="Cancel"><svg width="13" height="13" viewBox="0 0 13 13" stroke="#d5d5da" strokeWidth="2.400"><path d="m1 1 11 11M12 1 1 12" /></svg></IconButton>
        <Timer>00:00:02</Timer>
        <IconButton $w={12} $h={14} aria-label="Microphone"><svg width="10" height="14" viewBox="0 0 10 14" fill="none" stroke="#1f95a3"><rect x="3" y=".7" width="4" height="7.500" rx="2" fill="#1f95a3" /><path d="M.8 5.500v1a4.200 4.200 0 0 0 8.400 0v-1M5 10.700v2.500M2.500 13.300h5" strokeWidth="1.200" /></svg></IconButton>
        <PenColumn>
          <IconButton $w={8} $h={3} aria-label="Minimize recorder"><svg width="8" height="1" viewBox="0 0 8 1"><path d="M0 .5h8" stroke="#bbb" /></svg></IconButton>
          <IconButton $w={18} $h={12} aria-label="Draw"><svg width="11" height="11" viewBox="0 0 11 11" fill="#e0e0e4"><path d="M0 11l.8-3L7 1.800 9.200 4 3 10.200zM7.800 1 9 0l2 2-1 1.200z" /></svg></IconButton>
        </PenColumn>
      </Recorder>
    </Window>
  );
}
